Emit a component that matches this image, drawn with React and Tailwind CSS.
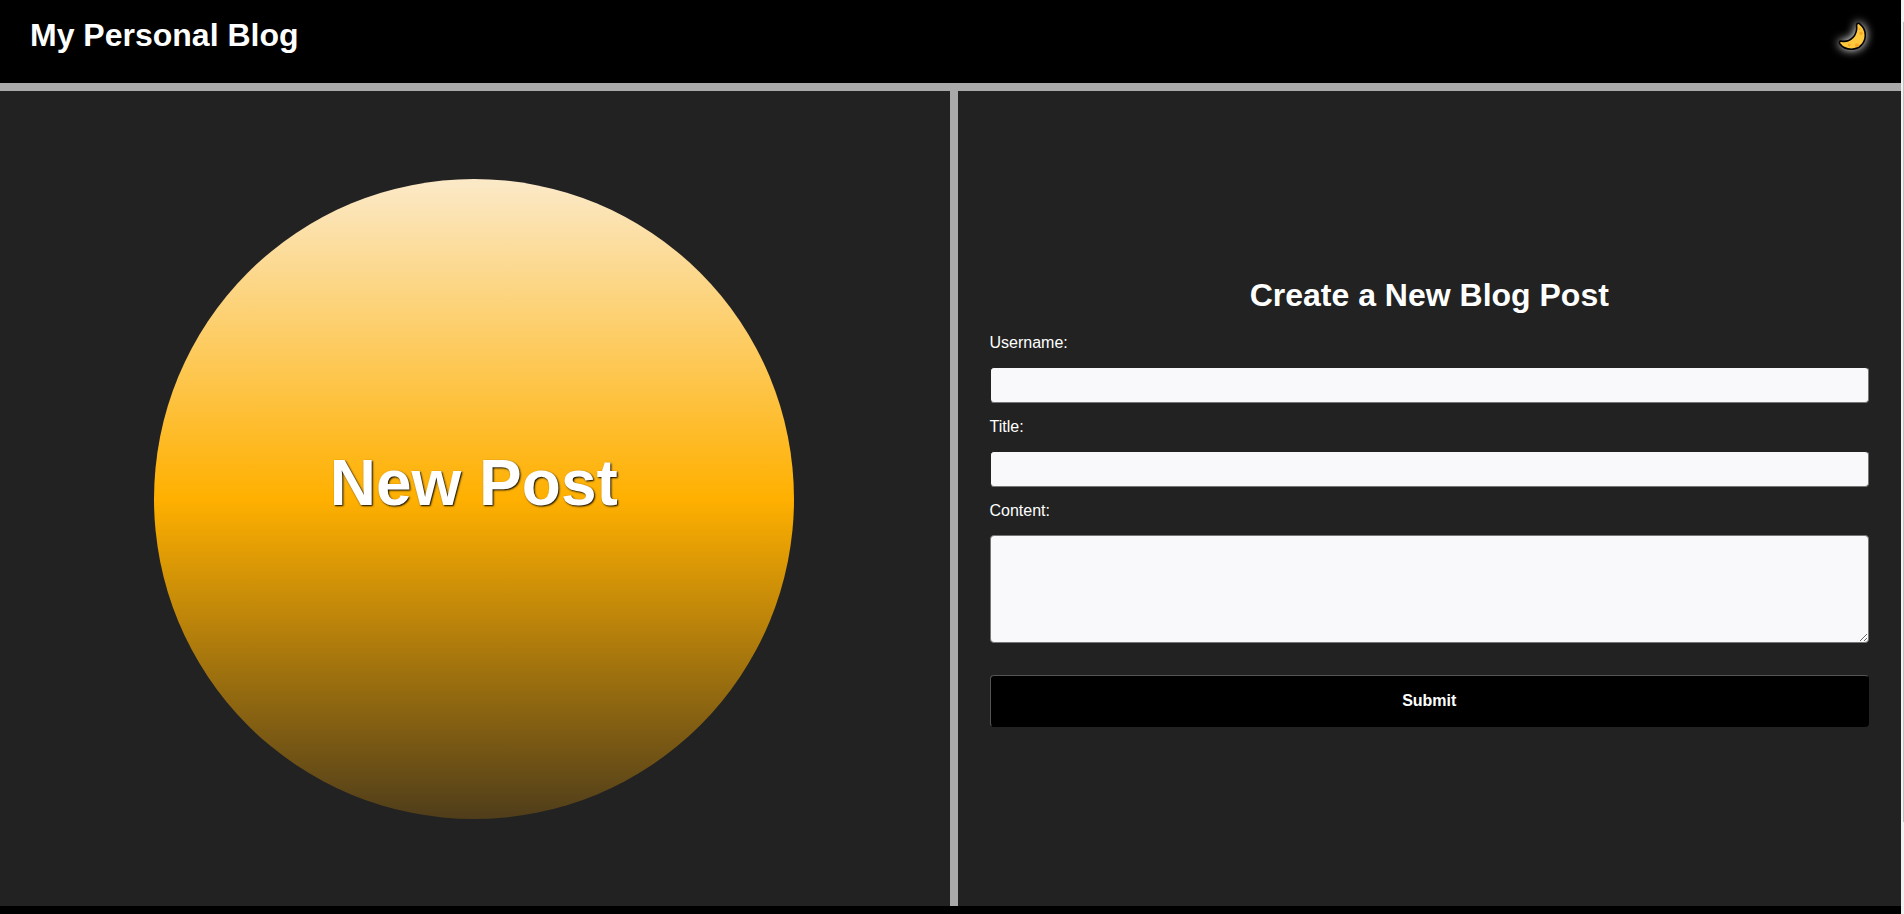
function Moon() {
  return (
    <svg viewBox="0 0 32 32" className="size-8" aria-hidden="true">
      <path
        d="M19.600 4.300C19.500 2.100 21.800 1.700 23 3.200C26.200 5.800 28.300 9.600 28.300 14.200C28.300 22 22.400 28.200 14.600 28.200C9.400 28.200 5 25.800 2.800 22.700C1.800 21 3 19.700 4.700 20.200C13 21.600 20.800 14.600 19.600 4.300Z"
        fill="#ffc83d"
        stroke="#000"
        strokeWidth="1.6"
        strokeLinejoin="round"
      />
      <g fill="#f9a825">
        <circle cx="24" cy="12.200" r="1.700" />
        <circle cx="22.400" cy="8" r="1" />
        <circle cx="12.200" cy="24" r="1.400" />
        <circle cx="20" cy="24.300" r="2" />
      </g>
    </svg>
  );
}

function Field({ id, label, children }) {
  return (
    <div className="flex flex-col">
      <label htmlFor={id} className="mb-[14px] text-base leading-5">
        {label}
      </label>
      {children}
    </div>
  );
}

const inputLook =
  "block h-9 w-full rounded-[4px] border border-t-[#222222] border-r-[#767676] border-b-[#767676] border-l-[#222222] bg-[#f9f9fb] px-2 text-base text-black";

export default function App() {
  return (
    <div className="flex min-h-screen bg-black font-['Liberation_Sans',Arial,sans-serif] text-white">
      <div className="flex grow flex-col">
        <header className="flex h-[91px] items-start justify-between border-b-8 border-[#a9a9a9] pt-[17px] pr-8 pl-[30px]">
          <h1 className="text-[32px] leading-[37px] font-bold">My Personal Blog</h1>
          <button type="button" aria-label="Toggle dark mode" className="mt-1 drop-shadow-[0_0_5px_#fff]">
            <Moon />
          </button>
        </header>
        <main className="flex grow bg-[#222222]">
          <section className="flex flex-1 items-center justify-center pr-0.5">
            <div className="flex size-[640px] items-center justify-center rounded-full bg-[linear-gradient(to_bottom,#fbe9c8,#ffb000,#4f3d1a)] pb-8">
              <h2 className="text-[64px] leading-[74px] font-bold [text-shadow:1px_1px_2px_#000]">New Post</h2>
            </div>
          </section>
          <section className="flex basis-[calc(50%+1px)] flex-col justify-center border-l-8 border-[#a9a9a9] px-8 pt-1.5">
            <form className="flex flex-col gap-[14px]">
              <h2 className="mb-1 text-center text-[32px] leading-[39px] font-bold">Create a New Blog Post</h2>
              <Field id="username" label="Username:">
                <input id="username" type="text" className={inputLook} />
              </Field>
              <Field id="title" label="Title:">
                <input id="title" type="text" className={inputLook} />
              </Field>
              <Field id="content" label="Content:">
                <textarea
                  id="content"
                  className="block h-[108px] w-full resize rounded-[4px] border border-[#767676] bg-[#f9f9fb] px-2 text-base text-black"
                />
              </Field>
              <button
                type="submit"
                className="mt-[18px] h-[52px] rounded-[4px] border border-t-[#555] border-r-black border-b-black border-l-[#555] bg-black text-base font-bold"
              >
                Submit
              </button>
            </form>
          </section>
        </main>
        <footer className="h-2 bg-black" />
      </div>
      <div className="w-[3px] shrink-0 bg-[#f1f1f1] pt-[22px]">
        <div className="ml-auto h-[800px] w-px bg-[#c1c1c1]" />
      </div>
    </div>
  );
}
